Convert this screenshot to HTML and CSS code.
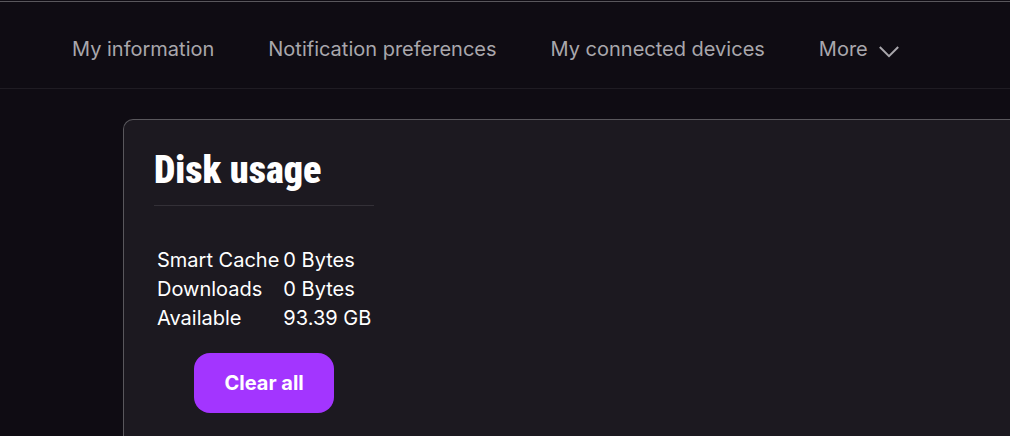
FILE: index.html
```
<!DOCTYPE html>
<html lang="en">
<head>
  <meta charset="UTF-8" />
  <meta name="viewport" content="width=device-width, initial-scale=1" />
  <title>Disk usage</title>
  <link rel="stylesheet" href="styles.css">
</head>
<body>
  <!-- Account navigation -->
  <nav class="tabs" aria-label="Account settings">
    <a class="tab" href="#information">My information</a>
    <a class="tab" href="#notifications">Notification preferences</a>
    <a class="tab" href="#devices">My connected devices</a>
    <button class="tab more" type="button" aria-haspopup="true">
      More
      <svg class="chevron" viewBox="0 0 20 12" aria-hidden="true">
        <path d="M0.8 1 L10 10.2 L19.2 1" />
      </svg>
    </button>
  </nav>

  <main class="content">
    <section class="card" aria-labelledby="disk-title">
      <div class="disk">
        <h1 class="title" id="disk-title">Disk usage</h1>
        <table class="usage">
          <tbody>
            <tr><th scope="row">Smart Cache</th><td>0 Bytes</td></tr>
            <tr><th scope="row">Downloads</th><td>0 Bytes</td></tr>
            <tr><th scope="row">Available</th><td>93.39 GB</td></tr>
          </tbody>
        </table>
        <button class="clear" type="button">Clear all</button>
      </div>
    </section>
  </main>
</body>
</html>
```
FILE: styles.css
```
* {
  box-sizing: border-box;
}
body {
  margin: 0;
  padding-top: 1px;
  min-height: 100vh;
  display: flex;
  flex-direction: column;
  background: #0f0c13;
  color: #fff;
  font-family: Inter, sans-serif;
  font-size: 20px;
  line-height: 25px;
  overflow-x: hidden;
}

/* Navigation */
.tabs {
  display: flex;
  align-items: center;
  gap: 54px;
  padding: 35px 72px 26px;
  border-top: 1px solid #59575c;
  border-bottom: 1px solid #1f1c23;
}
.tab {
  padding: 0;
  border: 0;
  background: none;
  color: #a9a7ac;
  font: inherit;
  text-decoration: none;
  white-space: nowrap;
}
.more {
  display: flex;
  align-items: center;
  gap: 11px;
  cursor: pointer;
}
.chevron {
  width: 20px;
  height: 12px;
  margin-top: 4px;
  fill: none;
  stroke: #a9a7ac;
  stroke-width: 2;
}

/* Card runs off the right and bottom edges */
.content {
  flex: 1;
  display: flex;
  padding: 30px 0 0 123px;
}
.card {
  flex: 1;
  padding: 30px;
  border: 1px solid #59575c;
  border-width: 1px 0 0 1px;
  border-radius: 10px 0 0 0;
  background: #1c1920;
}
.disk {
  width: fit-content;
  display: flex;
  flex-direction: column;
  align-items: center;
}
.title {
  align-self: stretch;
  margin: 0 0 39px;
  padding-bottom: 15px;
  border-bottom: 1px solid #333037;
  font-family: "Roboto Condensed", Roboto, sans-serif;
  font-size: 38px;
  line-height: 40px;
  font-weight: 900;
}
.usage {
  border-spacing: 2px;
}
.usage th,
.usage td {
  padding: 1px;
  font-weight: 400;
  text-align: left;
}
.clear {
  margin-top: 19px;
  padding: 18px 30px 17px;
  border: 0;
  border-radius: 16px;
  background: #a335ff;
  color: #fff;
  font: inherit;
  font-weight: 700;
  cursor: pointer;
}
```
